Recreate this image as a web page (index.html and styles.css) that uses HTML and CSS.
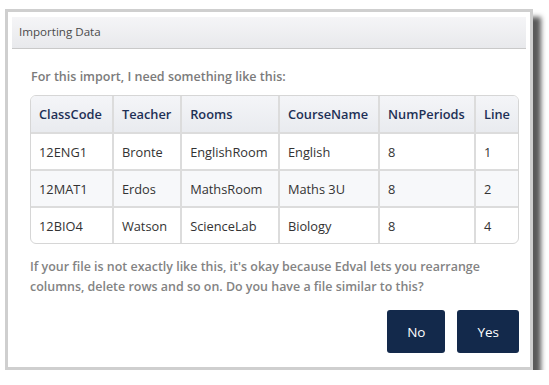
FILE: index.html
```html
<!DOCTYPE html>
<html lang="en">
<head>
  <meta charset="UTF-8" />
  <title>Importing Data</title>
  <link rel="stylesheet" href="styles.css">
</head>
<body>
  <div class="dialog">
    <div class="title-bar">Importing Data</div>

    <div class="content">
      <h3>For this import, I need something like this:</h3>

      <div class="table-wrap">
        <table>
          <thead>
            <tr>
              <th class="c1">ClassCode</th>
              <th class="c2">Teacher</th>
              <th class="c3">Rooms</th>
              <th class="c4">CourseName</th>
              <th class="c5">NumPeriods</th>
              <th class="c6">Line</th>
            </tr>
          </thead>
          <tbody>
            <tr>
              <td>12ENG1</td><td>Bronte</td><td>EnglishRoom</td><td>English</td><td>8</td><td>1</td>
            </tr>
            <tr>
              <td>12MAT1</td><td>Erdos</td><td>MathsRoom</td><td>Maths 3U</td><td>8</td><td>2</td>
            </tr>
            <tr>
              <td>12BIO4</td><td>Watson</td><td>ScienceLab</td><td>Biology</td><td>8</td><td>4</td>
            </tr>
          </tbody>
        </table>
      </div>

      <p class="note">If your file is not exactly like this, it's okay because Edval lets you rearrange columns, delete rows and so on. Do you have a file similar to this?</p>

      <div class="button-group">
        <button>No</button>
        <button>Yes</button>
      </div>
    </div>
  </div>
</body>
</html>
```

FILE: styles.css
```css
body {
  margin: 0;
  background-color: #fff;
  font-family: 'Open Sans', sans-serif;
}

.dialog {
  box-sizing: border-box;
  width: 528px;
  height: 361px;
  margin: 9px 0 0 5px;
  padding: 5px 4px 0 4px;
  border: 3px solid #cfcfcf;
  background-color: #fff;
  box-shadow: 8px 8px 5px #5a5a5a;
}

.title-bar {
  height: 31px;
  line-height: 30px;
  padding-left: 7px;
  font-size: 11.6px;
  color: #4a4a4a;
  background: linear-gradient(#f5f5f7, #e8e9ec);
  border-bottom: 1px solid #c9c9c9;
}

.content {
  padding: 0 7px 0 18px;
}

h3 {
  margin: 19px 0 10px 1px;
  font-size: 12.5px;
  font-weight: 600;
  color: #7b7b7b;
}

.table-wrap {
  border: 1px solid #d6d6d6;
  border-radius: 6px;
  overflow: hidden;
}

table {
  width: 100%;
  border-collapse: collapse;
  font-size: 12.8px;
}

th, td {
  height: 35px;
  padding: 0 8px;
  text-align: left;
  border: 2px solid #dcdcdc;
}

tr > :first-child { border-left: none; }
tr > :last-child { border-right: none; }
thead th { border-top: none; }
tbody tr:last-child td { border-bottom: none; }

th {
  height: 36px;
  font-weight: 600;
  color: #1e3056;
  background: linear-gradient(#f4f5f8, #e9ebef);
}

td {
  color: #333;
}

tbody tr:nth-child(2) td {
  background-color: #f7f8fa;
}

.c1 { width: 67px; }
.c2 { width: 51px; }
.c3 { width: 82px; }
.c4 { width: 84px; }
.c5 { width: 79px; }

.note {
  margin: 13px 0 0 0;
  font-size: 12.45px;
  line-height: 20px;
  font-weight: 600;
  color: #838383;
}

.button-group {
  display: flex;
  justify-content: flex-end;
  gap: 12px;
  margin-top: 13px;
}

button {
  height: 43px;
  padding: 0 20px;
  border: none;
  border-radius: 3px;
  background-color: #13294b;
  color: #fff;
  font-family: 'Open Sans', sans-serif;
  font-size: 13.5px;
}
```
